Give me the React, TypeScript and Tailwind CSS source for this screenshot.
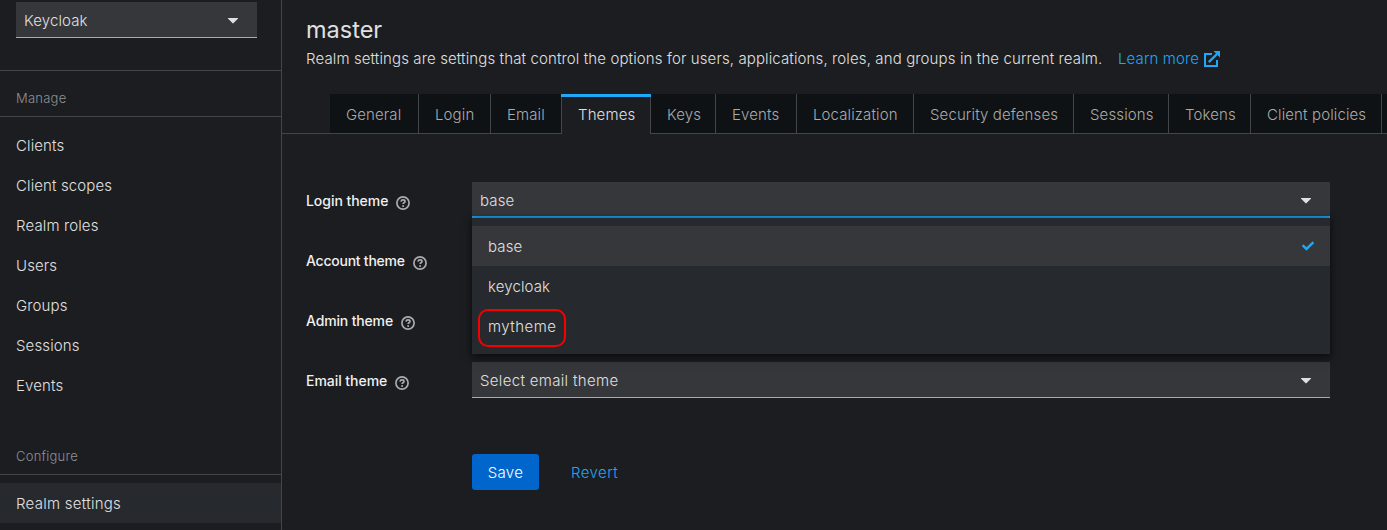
import type { ReactNode } from "react";
import clsx from "clsx";

const tabs = [
  { label: "General", width: "w-[89px]" },
  { label: "Login", width: "w-[72px]" },
  { label: "Email", width: "w-[70px]" },
  { label: "Themes", width: "w-[90px]", active: true },
  { label: "Keys", width: "w-[65px]" },
  { label: "Events", width: "w-[81px]" },
  { label: "Localization", width: "w-[117px]" },
  { label: "Security defenses", width: "w-[160px]" },
  { label: "Sessions", width: "w-[95px]" },
  { label: "Tokens", width: "w-[82px]" },
  { label: "Client policies", width: "w-[131px]" },
];

const manageItems = ["Clients", "Client scopes", "Realm roles", "Users", "Groups", "Sessions", "Events"];

function Caret() {
  return (
    <svg viewBox="0 0 10 6" className="h-[6px] w-[10px] shrink-0 fill-[#e0e0e0]">
      <path d="M.5 0h9c.5 0 .7.5.4.8L5.6 5.1c-.3.4-.9.4-1.2 0L.1.8C-.2.5 0 0 .5 0Z" />
    </svg>
  );
}

function ExternalLinkIcon() {
  return (
    <svg viewBox="0 0 16 16" className="h-4 w-4 shrink-0">
      <path d="M8 3H1v12h12V9" fill="none" stroke="#1fa7f8" strokeWidth="2" />
      <path d="M4.8 11.2 13 3" fill="none" stroke="#1fa7f8" strokeWidth="2.4" />
      <path d="M9.5 0H16v6.5Z" fill="#1fa7f8" />
    </svg>
  );
}

function HelpIcon() {
  return (
    <svg viewBox="0 0 14 14" className="mt-[3px] h-[14px] w-[14px] shrink-0" fill="none" stroke="#aaabac">
      <circle cx="7" cy="7" r="6.1" strokeWidth="1.7" />
      <path d="M5 5.6C5.2 4.3 6 3.9 7 3.9c1.1 0 2 .6 2 1.6 0 1.3-1.9 1.3-1.9 2.6" strokeWidth="1.7" />
      <circle cx="7.1" cy="9.9" r="1" fill="#aaabac" stroke="none" />
    </svg>
  );
}

function CheckIcon() {
  return (
    <svg viewBox="0 0 512 512" className="h-3 w-3 shrink-0 fill-[#1fa7f8]">
      <path d="M173.898 439.404l-166.4-166.4c-9.997-9.997-9.997-26.206 0-36.204l36.203-36.204c9.997-9.998 26.207-9.998 36.204 0L192 312.69 432.095 72.596c9.997-9.997 26.207-9.997 36.204 0l36.203 36.204c9.997 9.997 9.997 26.206 0 36.204l-294.4 294.401c-9.998 9.997-26.207 9.997-36.204-.001z" />
    </svg>
  );
}

function FieldRow({ label, tracking, children }: { label: string; tracking: string; children?: ReactNode }) {
  return (
    <div className="flex h-[60px] items-start">
      <div className="flex h-9 w-[166px] items-center gap-2 pt-[2px]">
        <span className={clsx("text-[14px] font-medium text-[#f0f0f0]", tracking)}>{label}</span>
        <HelpIcon />
      </div>
      {children}
    </div>
  );
}

function SectionTitle({ children }: { children: string }) {
  return (
    <h2 className="flex h-[46px] items-center border-b border-[#444548] pl-4 pt-[9px] text-[13px] tracking-[0.018em] text-[#8f9194]">
      {children}
    </h2>
  );
}

export default function App() {
  return (
    <div className="flex h-[530px] w-[1387px] overflow-hidden bg-[#1b1d21] font-['Inter',sans-serif] text-[15px] font-light leading-6 tracking-[0.008em] text-[#e0e0e0]">
      <aside className="w-[282px] shrink-0 border-r border-[#444548]">
        <div className="h-[71px] border-b border-[#444548] pl-4 pt-[2px]">
          <div className="flex h-9 w-[241px] items-center justify-between border-b border-[#aaabac] bg-[#36373a] pl-2 pr-[19px] pt-[2px]">
            <span>Keycloak</span>
            <Caret />
          </div>
        </div>
        <SectionTitle>Manage</SectionTitle>
        <ul className="pt-2">
          {manageItems.map((item) => (
            <li key={item} className="flex h-10 items-center pl-4 pt-[2px]">{item}</li>
          ))}
        </ul>
        <div className="pt-6">
          <SectionTitle>Configure</SectionTitle>
        </div>
        <div className="pt-2">
          <div className="flex h-10 items-center bg-[#26292d] pl-4 pt-[2px] tracking-[0.018em]">Realm settings</div>
        </div>
      </aside>

      <main className="min-w-0 flex-1">
        <header className="h-[94px] pl-6 pt-[14px]">
          <h1 className="text-[23.5px] font-normal leading-[31px] tracking-normal">master</h1>
          <p className="flex items-center whitespace-nowrap pt-[2px]">
            <span className="w-[812px]">
              Realm settings are settings that control the options for users, applications, roles, and groups in the current realm.
            </span>
            <a className="flex items-center gap-[5px] text-[#1fa7f8]">
              <span className="w-[81px]">Learn more</span>
              <ExternalLinkIcon />
            </a>
          </p>
        </header>

        <nav className="flex h-10 overflow-hidden">
          <div className="w-12 shrink-0 border-b border-[#444548]" />
          {tabs.map((tab) => (
            <div
              key={tab.label}
              className={clsx(
                "flex shrink-0 flex-col whitespace-nowrap",
                tab.width,
                tab.active ? "text-[#e0e0e0]" : "border-b border-[#444548] bg-[#0f1214] text-[#aaabac]",
              )}
            >
              {tab.active && <div className="h-[3px] shrink-0 bg-[#1fa7f8]" />}
              <div
                className={clsx(
                  "flex flex-1 items-center border-[#444548]",
                  tab.active ? "border-x pb-px pl-4" : tab.label === "Email" ? "pl-4 pt-[2px]" : "border-r pl-4 pt-[2px]",
                )}
              >
                {tab.label}
              </div>
            </div>
          ))}
          <div className="flex-1 border-b border-[#444548] bg-[#0f1214]" />
        </nav>

        <form className="pl-6 pt-12">
          <FieldRow label="Login theme" tracking="tracking-[-0.003em]">
            <div className="relative w-[858px]">
              <div className="flex h-9 items-center justify-between border-b-2 border-[#1b9bea] bg-[#36373a] pl-2 pr-[19px] pt-[3px]">
                base
                <Caret />
              </div>
              <ul className="absolute left-0 top-9 w-full bg-[#26292d] py-2 shadow-[0_4px_8px_rgba(3,3,3,0.5),0_0_6px_rgba(3,3,3,0.3)]">
                <li className="flex h-10 items-center justify-between bg-[#36373a] px-4">
                  <span className="pt-[2px]">base</span>
                  <CheckIcon />
                </li>
                <li className="flex h-10 items-center px-4 pt-[2px]">keycloak</li>
                <li className="relative flex h-10 items-center px-4 pt-[2px] tracking-[0.03em]">
                  mytheme
                  <span className="absolute left-[6px] top-[3px] h-[38px] w-[88px] rounded-[10px] border-2 border-[#f80000]" />
                </li>
              </ul>
            </div>
          </FieldRow>
          <FieldRow label="Account theme" tracking="tracking-[-0.017em]" />
          <FieldRow label="Admin theme" tracking="tracking-[-0.011em]" />
          <FieldRow label="Email theme" tracking="tracking-[-0.003em]">
            <div className="flex h-9 w-[858px] items-center justify-between border-b border-[#aaabac] bg-[#36373a] pl-2 pr-[19px] pt-[2px] tracking-[0.022em]">
              Select email theme
              <Caret />
            </div>
          </FieldRow>
          <div className="flex items-center pl-[166px] pt-8">
            <button type="button" className="h-9 w-[67px] rounded-[3px] bg-[#0066cc] pt-[2px] tracking-[0.02em] text-white">Save</button>
            <button type="button" className="ml-8 pt-[2px] tracking-[0.03em] text-[#1fa7f8]">Revert</button>
          </div>
        </form>
      </main>
    </div>
  );
}
